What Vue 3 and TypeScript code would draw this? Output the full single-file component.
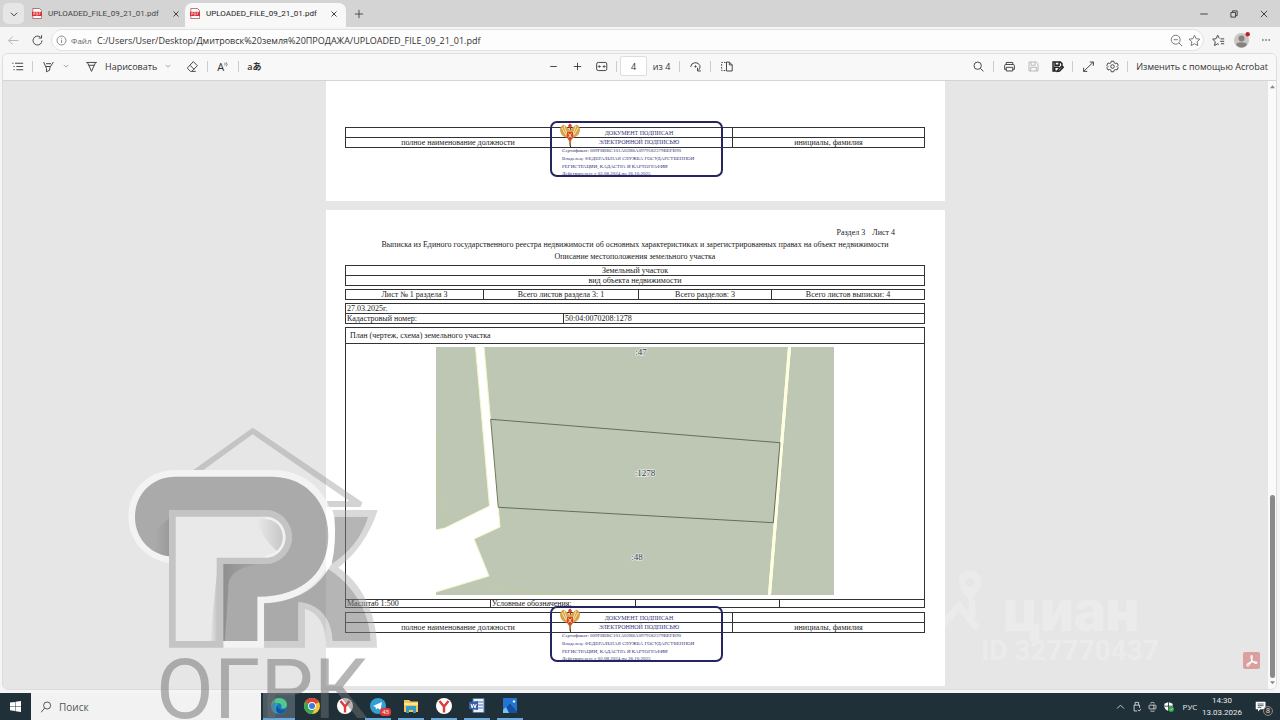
<script setup lang="ts">
import { ref } from 'vue'

const tabs = ref([
  { id: 1, title: 'UPLOADED_FILE_09_21_01.pdf', active: false },
  { id: 2, title: 'UPLOADED_FILE_09_21_01.pdf', active: true },
])
const url = ref('C:/Users/User/Desktop/Дмитровск%20земля%20ПРОДАЖА/UPLOADED_FILE_09_21_01.pdf')
const page = ref('4')
const query = ref('')

const stampLines = [
  'Сертификат: 009F8BBC101A02B8A0979182379BEFB90',
  'Владелец: ФЕДЕРАЛЬНАЯ СЛУЖБА ГОСУДАРСТВЕННОЙ',
  'РЕГИСТРАЦИИ, КАДАСТРА И КАРТОГРАФИИ',
  'Действителен: с 02.08.2024 по 26.10.2025',
]
const apps = ['edge', 'chrome', 'yandex', 'telegram', 'explorer', 'yandex2', 'word', 'photos']
</script>

<template>
  <div class="screen">
    <header class="tabs">
      <button class="tabmenu" aria-label="Меню вкладок">
        <svg viewBox="0 0 16 16" class="ic small"><path d="M3 6l5 5 5-5" /></svg>
      </button>
      <div v-for="t in tabs" :key="t.id" class="tab" :class="{ active: t.active }">
        <svg viewBox="0 0 12 12" class="pdf">
          <path d="M1 0h8l2.500 2.500V12H1z" fill="#fff" stroke="#a33" stroke-width=".8" />
          <path d="M0 4h12v5H0z" fill="#d92b32" />
          <path d="M2 8V5h1.500v1.500H2M5 5v3h1.500V5H5M8.500 8V5H10M8.500 6.500H10" fill="none" stroke="#fff" stroke-width=".6" />
        </svg>
        <span class="tabtitle">{{ t.title }}</span>
        <button class="close" aria-label="Закрыть вкладку">
          <svg viewBox="0 0 16 16" class="ic small"><path d="M4 4l8 8M12 4l-8 8" /></svg>
        </button>
      </div>
      <button class="newtab" aria-label="Новая вкладка">
        <svg viewBox="0 0 16 16" class="ic"><path d="M8 2.500v11M2.500 8h11" /></svg>
      </button>
      <div class="winbtns">
        <button aria-label="Свернуть"><svg viewBox="0 0 16 16" class="ic small"><path d="M2 8h12" /></svg></button>
        <button aria-label="Восстановить"><svg viewBox="0 0 16 16" class="ic small"><path d="M3 5.500h7.500V13H3zM5.500 5V3H13v7.500h-2" /></svg></button>
        <button aria-label="Закрыть"><svg viewBox="0 0 16 16" class="ic small"><path d="M3 3l10 10M13 3L3 13" /></svg></button>
      </div>
    </header>

    <div class="address">
      <button class="icb off" aria-label="Назад"><svg viewBox="0 0 16 16" class="ic"><path d="M14 8H2M7 3L2 8l5 5" /></svg></button>
      <button class="icb" aria-label="Обновить"><svg viewBox="0 0 16 16" class="ic"><path d="M13.500 8a5.500 5.500 0 1 1-2-4.200M13 1.500V5H9.500" /></svg></button>
      <div class="omni">
        <svg viewBox="0 0 16 16" class="ic info"><circle cx="8" cy="8" r="6.500" /><path d="M8 7v4.500M8 4.500v1" /></svg>
        <label class="scheme" for="url">Файл</label>
        <input id="url" v-model="url" class="url" type="text" />
        <button class="mini" aria-label="Масштаб"><svg viewBox="0 0 16 16" class="ic light"><circle cx="7" cy="7" r="5.500" /><path d="M11 11l4 4M4.500 7h5" /></svg></button>
        <button class="mini" aria-label="В избранное"><svg viewBox="0 0 16 16" class="ic light"><path d="M8 1.500l2 4.300 4.700.6-3.500 3.200.9 4.700L8 12l-4.100 2.300.9-4.700L1.300 6.400 6 5.800z" /></svg></button>
      </div>
      <button class="icb" aria-label="Избранное"><svg viewBox="0 0 16 16" class="ic"><path d="M9 5.500L7 1.500 5 5.800l-4.200.6L4 9.500l-.9 4.700L7 12l1.500.8M10.500 6H15M10 9h5M11 12h4" /></svg></button>
      <button class="icb" aria-label="Профиль">
        <svg viewBox="0 0 16 16" class="avatar"><circle cx="7.500" cy="8.500" r="7.500" fill="#c9c6c4" /><circle cx="7.500" cy="6.500" r="3" fill="#85817f" /><path d="M2 12.500c1-3 10-3 11 0-2.500 4-8.500 4-11 0z" fill="#85817f" /><circle cx="13.700" cy="2.200" r="2.200" fill="#b8232b" /></svg>
      </button>
      <button class="icb" aria-label="Ещё"><svg viewBox="0 0 16 16" class="dots"><circle cx="3" cy="8" r="1.200" /><circle cx="8" cy="8" r="1.200" /><circle cx="13" cy="8" r="1.200" /></svg></button>
    </div>

    <div class="frame">
      <div class="toolbar">
        <div class="group start-side">
          <button class="icb" aria-label="Содержание"><svg viewBox="0 0 16 16" class="ic"><path d="M5 4h10M6.500 8H15M6.500 12H15M1.500 4h1.500M3 8h1.500M3 12h1.500" /></svg></button>
          <i class="sep"></i>
          <button class="icb" aria-label="Выделить"><svg viewBox="0 0 16 16" class="ic"><path d="M2 2.500l2.500 5.500h6L14 2.500M4.500 8l1 2.500v4l4-2V10l1-2M5 4.500h6" /></svg></button>
          <button class="chev" aria-label="Цвет выделения"><svg viewBox="0 0 16 16" class="ic tiny"><path d="M2 5l6 6 6-6" /></svg></button>
          <button class="draw"><svg viewBox="0 0 16 16" class="ic"><path d="M1.500 3h13M3 3l5 11 5-11M4.500 6.500h7" /></svg>Нарисовать</button>
          <button class="chev" aria-label="Параметры пера"><svg viewBox="0 0 16 16" class="ic tiny"><path d="M2 5l6 6 6-6" /></svg></button>
          <button class="icb erase" aria-label="Ластик"><svg viewBox="0 0 16 16" class="ic"><path d="M2 9.500L9 2l5 5-7 7H5.500L2 10.500zM5 6.500l5 5M7 14h5" /></svg></button>
          <i class="sep"></i>
          <button class="icb glyph" aria-label="Прочесть вслух">A<svg viewBox="0 0 8 16" class="waves"><path d="M1 3q1.500 2 0 4M3.500 2q3 3.500 0 6.500" /></svg></button>
          <i class="sep"></i>
          <button class="icb glyph lingo" aria-label="Перевести">aあ</button>
        </div>
        <div class="group">
          <button class="icb" aria-label="Уменьшить"><svg viewBox="0 0 16 16" class="ic"><path d="M4 8h8" /></svg></button>
          <button class="icb" aria-label="Увеличить"><svg viewBox="0 0 16 16" class="ic"><path d="M8 3.500v9M3.500 8h9" /></svg></button>
          <button class="icb" aria-label="По ширине"><svg viewBox="0 0 16 16" class="ic"><rect x="2" y="3" width="12.500" height="10" rx="2" /><path d="M4.500 8h2.500M9.500 8H12M5.500 6.500L4 8l1.500 1.500M11 6.500L12.500 8 11 9.500" /></svg></button>
          <i class="sep"></i>
          <input v-model="page" class="pageno" type="text" aria-label="Страница" />
          <span class="of">из 4</span>
          <i class="sep"></i>
          <button class="icb" aria-label="Повернуть"><svg viewBox="0 0 16 16" class="ic"><path d="M2 8.500A6 6 0 0 1 13.500 7c.5 2-.5 4.500-2.500 6M10.500 9.500v4h4" /><circle cx="8" cy="8" r=".8" fill="#444" /></svg></button>
          <i class="sep"></i>
          <button class="icb" aria-label="Вид страницы"><svg viewBox="0 0 16 16" class="ic"><path d="M8 2.500h3.500L15 6v7.500H8zM11.500 2.500V6H15" /><path d="M7 3H2v10h5" stroke-dasharray="2 1.500" /></svg></button>
        </div>
        <div class="group end">
          <button class="icb" aria-label="Найти"><svg viewBox="0 0 16 16" class="ic"><circle cx="7" cy="7" r="4.500" /><path d="M10.500 10.500L14 14" /></svg></button>
          <i class="sep"></i>
          <button class="icb" aria-label="Печать"><svg viewBox="0 0 16 16" class="ic"><path d="M4 5.500V3h8v2.500M4 11.500H2V7q0-1.500 1.500-1.500h9Q14 5.500 14 7v4.500h-2M4 9h8v4.500H4z" /></svg></button>
          <button class="icb off" aria-label="Сохранить"><svg viewBox="0 0 16 16" class="ic"><path d="M2.500 2.500h9l2 2v9h-11zM5 2.500v4h5v-4M4.500 13.500V9h7v4.500" /></svg></button>
          <button class="icb" aria-label="Сохранить как"><svg viewBox="0 0 16 16" class="ic bold"><path d="M7 13.500H2.500v-11h9l2 2V7M5 2.500v4h5v-4M4.500 13.500V9H10M8 14l1-2.500L13.500 7.500l1.500 1.500-4.500 4.500z" /></svg></button>
          <i class="sep"></i>
          <button class="icb" aria-label="Во весь экран"><svg viewBox="0 0 16 16" class="ic"><path d="M9.500 2.500h4.500V7M14 2.500L2 14M2 9.500V14h4.500" /></svg></button>
          <button class="icb" aria-label="Параметры"><svg viewBox="0 0 16 16" class="ic"><circle cx="8" cy="8" r="2.200" /><path d="M6.500 1.500h3l.5 2 1.500.8 2-.6L15 6.500 13.500 8 15 9.500l-1.500 2.800-2-.6-1.500.8-.5 2h-3l-.5-2-1.500-.8-2 .6L1 9.500 2.500 8 1 6.500l1.500-2.800 2 .6L6 3.500z" /></svg></button>
          <i class="sep"></i>
          <button class="acro">Изменить с помощью Acrobat</button>
        </div>
      </div>

      <div class="viewer">
        <main class="pages">
          <section class="sheet first">
            <div class="signed">
              <table>
                <colgroup><col class="c1" /><col class="c2" /><col /></colgroup>
                <tbody>
                  <tr><td></td><td></td><td></td></tr>
                  <tr><td>полное наименование должности</td><td></td><td>инициалы, фамилия</td></tr>
                </tbody>
              </table>
              <div class="stamp">
                <svg viewBox="0 0 20 24" class="eagle">
                  <path d="M10 7C8 5 6 3 4 2 3 1 1 3 0 6c0 4 2 7 5 8l3 1 2 8 2-8 3-1c3-1 5-4 5-8-1-3-3-5-4-4-2 1-4 3-6 5z" fill="#d9a347" />
                  <path d="M2 5l4 7M4 3l3 8M18 5l-4 7M16 3l-3 8" stroke="#fff3cf" stroke-width=".8" />
                  <path d="M8 3q2-5 4 0l-2 3zM7 9h6v6l-3 3-3-3z" fill="#d8452c" /><path d="M8.500 10.500l3 4M11.500 10.500l-3 4" stroke="#fbe3b0" /><path d="M10 17v6" stroke="#8f6a35" />
                </svg>
                <p class="cap">ДОКУМЕНТ ПОДПИСАН</p><p class="cap">ЭЛЕКТРОННОЙ ПОДПИСЬЮ</p>
                <p v-for="l in stampLines" :key="l">{{ l }}</p>
              </div>
            </div>
          </section>

          <section class="sheet second">
            <p class="secno"><span>Раздел 3</span><span>Лист 4</span></p>
            <h1>Выписка из Единого государственного реестра недвижимости об основных характеристиках и зарегистрированных правах на объект недвижимости</h1>
            <h2>Описание местоположения земельного участка</h2>
            <table>
              <tbody>
                <tr><td>Земельный участок</td></tr>
                <tr><td>вид объекта недвижимости</td></tr>
              </tbody>
            </table>
            <table>
              <colgroup><col class="s1" /><col class="s2" /><col class="s3" /><col /></colgroup>
              <tbody>
                <tr><td>Лист № 1 раздела 3</td><td>Всего листов раздела 3: 1</td><td>Всего разделов: 3</td><td>Всего листов выписки: 4</td></tr>
              </tbody>
            </table>
            <table class="left">
              <colgroup><col class="k1" /><col /></colgroup>
              <tbody>
                <tr><td colspan="2">27.03.2025г.</td></tr>
                <tr><td>Кадастровый номер:</td><td>50:04:0070208:1278</td></tr>
              </tbody>
            </table>
            <table class="left plan">
              <colgroup><col /><col /><col /><col /></colgroup>
              <tbody>
                <tr class="planhead"><td colspan="4">План (чертеж, схема) земельного участка</td></tr>
                <tr class="maprow">
                  <td colspan="4">
                    <svg viewBox="0 0 398 248" class="map">
                      <g fill="#bdc7b4" stroke="#f6f8c4" stroke-width="1">
                        <path d="M0 0H39.500L53.500 159 9 181 0 183z" stroke="none" />
                        <path d="M48 0H352L332 248H0V245L53 229 38 192 64 180z" stroke="none" />
                        <path d="M355 0H398V248H335z" stroke="none" />
                        <path d="M39.500 0L53.500 159 9 181 0 183M48 0L64 180 38 192 53 229 0 245" fill="none" />
                        <path d="M353.500 0L333.500 248" stroke="#ffffdc" stroke-width="3" />
                      </g>
                      <path d="M0 85v50l9 30v15M55 233l5 9 76 6" fill="none" stroke="#c5d08c" stroke-width=".6" />
                      <path d="M54.700 72.300L344 95.700 337.300 175.700 62.300 160.300z" fill="none" stroke="#4d564c" stroke-width=".8" />
                      <g class="lots"><text x="205" y="8">:47</text><text x="209" y="129">:1278</text><text x="201" y="213">:48</text></g>
                    </svg>
                  </td>
                </tr>
                <tr class="scale"><td>Масштаб 1:500</td><td>Условные обозначения:</td><td></td><td></td></tr>
              </tbody>
            </table>
            <div class="signed">
              <table>
                <colgroup><col class="c1" /><col class="c2" /><col /></colgroup>
                <tbody>
                  <tr><td></td><td></td><td></td></tr>
                  <tr><td>полное наименование должности</td><td></td><td>инициалы, фамилия</td></tr>
                </tbody>
              </table>
              <div class="stamp">
                <svg viewBox="0 0 20 24" class="eagle">
                  <path d="M10 7C8 5 6 3 4 2 3 1 1 3 0 6c0 4 2 7 5 8l3 1 2 8 2-8 3-1c3-1 5-4 5-8-1-3-3-5-4-4-2 1-4 3-6 5z" fill="#d9a347" />
                  <path d="M2 5l4 7M4 3l3 8M18 5l-4 7M16 3l-3 8" stroke="#fff3cf" stroke-width=".8" />
                  <path d="M8 3q2-5 4 0l-2 3zM7 9h6v6l-3 3-3-3z" fill="#d8452c" /><path d="M8.500 10.500l3 4M11.500 10.500l-3 4" stroke="#fbe3b0" /><path d="M10 17v6" stroke="#8f6a35" />
                </svg>
                <p class="cap">ДОКУМЕНТ ПОДПИСАН</p><p class="cap">ЭЛЕКТРОННОЙ ПОДПИСЬЮ</p>
                <p v-for="l in stampLines" :key="l">{{ l }}</p>
              </div>
            </div>
          </section>
        </main>
        <div class="bar">
          <svg viewBox="0 0 8 6" class="arrow"><path d="M4 0l4 5H0z" /></svg>
          <span class="thumb"></span>
          <svg viewBox="0 0 8 6" class="arrow"><path d="M4 5l4-5H0z" /></svg>
        </div>
        <button class="acrobadge" aria-label="Acrobat">
          <svg viewBox="0 0 16 16"><path d="M2.500 13.500C1 12 5 9.500 8.500 9s6 .5 5 1.500S9 9.500 7.500 6 7 1.500 8 2s0 5-2 8.500-3 3.500-3.500 3z" fill="none" stroke="#fff" stroke-width="1.200" /></svg>
        </button>
        <div class="cian">
          <svg viewBox="0 0 50 66" class="pin"><circle cx="35" cy="14" r="8" /><path d="M30 22l5 6 5-6M3 62L24 38 42 60M37 32v18" /></svg>
          <div><strong>циан</strong><span>ID 327770437</span></div>
        </div>
      </div>
    </div>

    <footer class="taskbar">
      <button class="start" aria-label="Пуск"><svg viewBox="0 0 12 12"><path d="M0 1.700L5.500 1v4.700H0zM6 .9L12 0v5.700H6zM0 6.200h5.500v4.700L0 10.200zM6 6.200h6V12l-6-.9z" fill="#fff" /></svg></button>
      <label class="search">
        <svg viewBox="0 0 16 16" class="ic"><circle cx="9.500" cy="6" r="4.700" /><path d="M6.200 9.500L1.500 15" /></svg>
        <input v-model="query" type="text" placeholder="Поиск" aria-label="Поиск" />
      </label>
      <nav class="apps">
        <button v-for="a in apps" :key="a" :class="['app', a]" :aria-label="a">
          <svg v-if="a === 'edge'" viewBox="0 0 16 16"><circle cx="8" cy="8" r="8" fill="#1779c4" /><path d="M0 8C0 3 4 0 8 0c5 0 8 3 8 7 0 3-3 4-6 3 2-3-1-5-4-5S1 6 0 8z" fill="#52c987" /><path d="M0 8c1-3 5-4 8-2-4 1-4 7 1 9-5 2-9-2-9-7z" fill="#25a5d8" /><path d="M7 8c0 4 4 5 8 3-2 4-6 5-8 4-3-2-2-6 0-7z" fill="#15549d" /></svg>
          <svg v-else-if="a === 'chrome'" viewBox="0 0 16 16"><circle cx="8" cy="8" r="8" fill="#f6c634" /><path d="M8 8L1.100 4A8 8 0 0 1 14.900 4z" fill="#dc4437" /><path d="M8 8L1.100 4A8 8 0 0 0 8 16l3.500-6z" fill="#3aa655" /><circle cx="8" cy="8" r="3.900" fill="#fff" /><circle cx="8" cy="8" r="3" fill="#3c7ce0" /></svg>
          <svg v-else-if="a.startsWith('yandex')" viewBox="0 0 16 16"><circle cx="8" cy="8" r="8" fill="#fff" /><path d="M3.500 3L8 8.500 12.500 3M8 8v6.500" fill="none" stroke="#df3c37" stroke-width="2.400" /></svg>
          <svg v-else-if="a === 'telegram'" viewBox="0 0 16 16"><circle cx="8" cy="8" r="8" fill="#349fd3" /><path d="M3 8l9-4-1.500 8-3-2-1.500 1.500-.5-2.500z" fill="#fff" /></svg>
          <svg v-else-if="a === 'explorer'" viewBox="0 0 16 16"><path d="M1 2h5l2 1.500h7V14H1z" fill="#f2c75b" /><path d="M1 5h14v2H1z" fill="#ffe49a" /><path d="M3 8h10v7h-3v-3H6v3H3z" fill="#3a9bbd" /></svg>
          <svg v-else-if="a === 'word'" viewBox="0 0 16 16"><path d="M4 .5h11v14H4z" fill="#e9f0fa" stroke="#5577b0" /><path d="M9 4h5M9 7h5M9 10h5" stroke="#5577b0" /><path d="M0 4l9-1v9l-9-1z" fill="#3760a8" /><path d="M2 6l1.200 4L4.500 6 6 10l1.200-4" fill="none" stroke="#fff" /></svg>
          <svg v-else viewBox="0 0 16 16"><rect x="1" width="14" height="15" rx="1" fill="#2374cf" /><path d="M1 15V12l7-7 7 8v2z" fill="#74c3f4" /><path d="M7 15l-3-6 4-4 7 8v2z" fill="#1450a5" /><circle cx="12" cy="3.500" r="1.300" fill="#d6f0ff" /></svg>
          <span v-if="a === 'telegram'" class="count">43</span>
        </button>
      </nav>
      <div class="tray">
        <button aria-label="Скрытые значки"><svg viewBox="0 0 16 16" class="ic"><path d="M3 11l5-5 5 5" /></svg></button>
        <button aria-label="USB"><svg viewBox="0 0 16 16" class="ic"><path d="M6 6V2h5v4M4.500 6h8v4M4.500 6v8.500H9M10 13l2 1.500 2.500-3" /></svg></button>
        <button aria-label="Подключение"><svg viewBox="0 0 16 16" class="ic"><rect x="3" y="6" width="10" height="5.500" rx="1" /><path d="M5 3q3-2 6 0M5 14.500q3 1 6 0M10 6v5.500" /></svg></button>
        <button aria-label="Защита"><svg viewBox="0 0 16 16" class="ic"><path d="M8 1.500L2 4v4c0 3 2.500 5.500 6 6.500 3.500-1 6-3.500 6-6.500V4z" fill="#fff" stroke="none" /><path d="M8 1v14M2 7.500h12" stroke="#1f2e36" /><circle cx="12" cy="12" r="4" fill="#27a844" stroke="none" /><path d="M10 12l1.500 1.500L14 10.500" /></svg></button>
        <span class="lang">РУС</span>
        <time class="clock"><span>14:30</span><span>13.03.2026</span></time>
        <button class="notes" aria-label="Уведомления"><svg viewBox="0 0 16 16"><path d="M1 1h13v10H7l-3 3v-3H1z" fill="#fff" /><path d="M3.500 4h8M3.500 6.200h8M3.500 8.500h5" stroke="#1f2e36" /></svg><span>8</span></button>
      </div>
    </footer>

    <div class="brand">
      <svg viewBox="0 0 870 915">
        <defs>
          <linearGradient id="fold" x1="0" x2="1"><stop offset="0" stop-color="#666" stop-opacity=".4" /><stop offset="1" stop-color="#777" stop-opacity="0" /></linearGradient>
          <linearGradient id="foldr" x1="0" x2="1"><stop offset="0" stop-color="#777" stop-opacity="0" /><stop offset="1" stop-color="#777" stop-opacity=".3" /></linearGradient>
        </defs>
        <path d="M250 165L428 38 757 262 752 276H650V258H718L428 58 280 165z" fill="rgba(145,145,145,.4)" />
        <path fill-rule="evenodd" d="M177 444C105 432 55 375 55 305 55 225 115 165 195 165H490C600 165 675 250 675 362 675 470 590 562 463 564V698H340V678H442V545C590 545 655 460 655 362 655 265 590 185 485 185H195C125 185 75 240 75 305 75 365 115 415 177 424z" fill="rgba(255,255,255,.5)" />
        <path d="M177 424C115 415 75 365 75 305 75 240 125 185 195 185H485C590 185 655 265 655 362 655 460 590 545 442 545V678H340V447H467C510 447 546 410 546 366S510 285 467 285H177z" fill="rgba(120,120,120,.55)" />
        <path fill-rule="evenodd" d="M177 285H467C510 285 546 322 546 366S510 447 467 447H340V698H177zM197 305V678H320V428H467C500 428 527 400 527 366S500 305 467 305z" fill="rgba(145,145,145,.4)" />
        <path d="M197 305H467C500 305 527 332 527 366S500 428 467 428H320V678H197z" fill="rgba(255,255,255,.12)" />
        <path d="M467 309C498 309 522 335 522 366S498 424 467 424" fill="none" stroke="#f1f1f1" stroke-width="8" />
        <path d="M340 678V447H467Q350 455 355 520L345 678z" fill="url(#fold)" />
        <path d="M177 424Q155 421 133 408V350L177 310z" fill="url(#foldr)" />
        <path d="M440 313H467C497 313 518 337 518 366 518 385 511 398 500 408Q455 370 440 313z" fill="url(#foldr)" />
        <path d="M300 678L320 480V678z" fill="url(#foldr)" />
        <path d="M673 305H775C755 370 715 415 665 447Q680 380 673 305zM655 462C730 510 780 590 782 678H667C665 610 625 565 565 562V678H462V565C560 560 620 520 655 462z" fill="rgba(120,120,120,.55)" />
        <path d="M667 285H803C780 360 735 420 685 458 750 500 801 590 801 698H648V678H782C780 590 730 510 655 462L665 447C715 415 755 370 775 305H673z" fill="rgba(170,170,170,.45)" />
        <path d="M462 678H565V562C625 565 665 610 667 678H648C645 625 620 590 585 582V698H462z" fill="rgba(190,190,190,.6)" />
      </svg>
      <span class="name">ОГРК</span>
    </div>
  </div>
</template>

<style>
body { margin: 0; }
</style>

<style scoped>
* { box-sizing: border-box; }
.screen { position: relative; height: 100vh; display: flex; flex-direction: column; overflow: hidden; background: #f5f5f5; color: #333; font: 9px "Open Sans", "Noto Sans", sans-serif; }
button { border: 0; padding: 0; background: none; color: inherit; font: inherit; display: flex; align-items: center; justify-content: center; }
input { border: 0; padding: 0; background: none; color: inherit; font: inherit; outline: 0; min-width: 0; }
p, h1, h2 { margin: 0; font-weight: 400; }
.ic { width: 13px; height: 13px; fill: none; stroke: #444; stroke-width: 1.2; flex: none; }
.ic.small { width: 10px; height: 10px; stroke-width: 1.6; }
.ic.tiny { width: 6px; height: 6px; stroke: #888; stroke-width: 2; }
.ic.light { stroke: #777; }
.ic.bold { stroke-width: 1.8; stroke: #222; }
.off { opacity: .35; }

.tabs { height: 27px; flex: none; display: flex; background: #d4d4d4; }
.tabmenu { width: 21px; height: 21px; margin: 3px 5px 3px 3px; border-radius: 5px; background: #e6e6e6; }
.tab { width: 156px; display: flex; align-items: center; padding-left: 3px; color: #444; }
.tab.active { width: 161px; background: #f8f8f8; margin: 3px 0 0; padding: 0 0 3px 5px; border-radius: 7px 7px 0 0; color: #222; }
.pdf { width: 10px; height: 11px; margin-right: 6px; flex: none; }
.tabtitle { font: 8px Roboto, sans-serif; white-space: nowrap; width: 122px; }
.tab .close { width: 12px; }
.newtab { width: 26px; }
.newtab .ic { width: 12px; height: 12px; }
.winbtns { margin-left: auto; display: flex; padding-right: 1px; }
.winbtns button { width: 30px; }

.address { height: 26px; flex: none; display: flex; align-items: center; padding-right: 2px; background: #f5f5f5; }
.address > .icb { width: 24px; height: 24px; }
.address > .icb:first-child { margin-left: 1px; }
.omni { flex: 1; height: 22px; margin: 0 2px; display: flex; align-items: center; background: #fdfdfd; border: 1px solid #e2e2e2; border-radius: 11px; padding: 0 0 0 4px; }
.ic.info { width: 11px; height: 11px; stroke: #777; }
.scheme { margin-left: 4px; width: 26px; color: #666; font-size: 8px; }
.url { flex: 1; color: #333; font-size: 9px; }
.mini { width: 18px; height: 18px; }
.avatar { width: 16px; height: 16px; }
.dots { width: 10px; height: 10px; fill: #333; }

.frame { flex: 1; min-height: 0; margin: 0 3px 3px 2px; display: flex; flex-direction: column; border: 1px solid #ddd; border-radius: 6px; overflow: hidden; }
.toolbar { height: 27px; flex: none; display: grid; grid-template-columns: 1fr auto 1fr; align-items: center; background: #f8f8f8; border-bottom: 1px solid #d4d4d4; padding-bottom: 2px; }
.group { display: flex; align-items: center; }
.start-side { padding-left: 2px; }
.group.end { justify-content: flex-end; padding-right: 8px; }
.icb { width: 24px; height: 22px; flex: none; }
.sep { width: 1px; height: 11px; margin: 0 3px; background: #ccc; }
.chev { width: 12px; height: 20px; }
.draw { gap: 7px; margin-left: 13px; margin-right: 5px; white-space: nowrap; }
.erase { margin-left: 6px; }
.glyph { font: 11px "Open Sans", "Noto Sans CJK JP", sans-serif; }
.lingo { font-size: 9px; font-weight: 600; }
.waves { width: 5px; height: 12px; fill: none; stroke: #444; }
.pageno { width: 27px; height: 20px; border: 1px solid #ddd; background: #fff; border-radius: 2px; text-align: center; }
.of { width: 29px; text-align: center; }
.acro { margin-left: 5px; white-space: nowrap; }

.viewer { position: relative; flex: 1; min-height: 0; display: flex; background: #e6e6e6; overflow: hidden; }
.pages { flex: 1; display: flex; flex-direction: column; align-items: center; gap: 9px; }
.sheet { width: 619px; flex: none; background: #fff; padding: 0 20px 0 19px; font: 8px/9px "Liberation Serif", serif; color: #222; }
.first { padding-top: 46px; padding-bottom: 53px; }
.second { padding-top: 17px; padding-bottom: 53px; }
.secno { display: flex; justify-content: flex-end; gap: 7px; padding-right: 30px; line-height: 12px; }
h1, h2 { font-size: 8px; line-height: 12px; text-align: center; white-space: nowrap; }
h2 { margin-bottom: 2px; }
table { width: 100%; border-collapse: collapse; table-layout: fixed; margin-bottom: 3px; }
td { height: 10px; padding: 0; border: 1px solid #333; text-align: center; line-height: 9px; white-space: nowrap; }
.left td { text-align: left; padding-left: 1px; }
.c1 { width: 225px; } .c2 { width: 162px; }
.s1 { width: 138px; } .s2 { width: 155px; } .s3 { width: 133px; }
.k1 { width: 218px; }
.plan { margin-bottom: 4px; }
.left .planhead td { height: 16px; padding-left: 4px; }
.left .maprow td { height: 256px; padding: 3px 0 0; vertical-align: top; }
.map { display: block; width: 398px; height: 248px; margin: 0 auto; }
.lots { font: 9px "Liberation Serif", serif; fill: #343c58; stroke: #e6eadf; stroke-width: 1.5px; paint-order: stroke; text-anchor: middle; }
.scale td { height: 8px; line-height: 7px; }
.signed { position: relative; }
.signed table { margin: 0; }
.stamp { position: absolute; left: 205px; top: -6px; width: 173px; height: 56px; border: 2px solid #25265f; border-radius: 7px; padding: 6px 0 0 10px; color: #33357a; font-size: 5px; line-height: 8px; white-space: nowrap; }
.stamp .cap { font-size: 6px; line-height: 9px; padding-right: 5px; text-align: center; }
.stamp p:last-child { line-height: 5px; }
.eagle { position: absolute; left: 8px; top: 0; width: 20px; height: 24px; }

.bar { width: 8px; background: #fafafa; display: flex; flex-direction: column; align-items: center; padding: 4px 0; }
.arrow { width: 5px; height: 4px; fill: #888; }
.thumb { width: 5px; height: 183px; margin: auto 0 3px; background: #8a8a8a; border-radius: 3px; }
.acrobadge { position: absolute; right: 16px; bottom: 20px; width: 17px; height: 17px; background: #d9a09f; border-radius: 2px; }
.acrobadge svg { width: 14px; height: 14px; }
.cian { position: absolute; right: 117px; bottom: 25px; display: flex; gap: 10px; opacity: .22; color: #fff; font-family: Roboto, sans-serif; font-weight: 700; }
.cian div { display: flex; flex-direction: column; }
.cian strong { font-size: 60px; line-height: 54px; padding-left: 8px; }
.cian span { font-size: 28px; line-height: 26px; margin-left: -14px; }
.pin { width: 50px; height: 66px; margin-top: -16px; fill: none; stroke: #fff; stroke-width: 7; }

.taskbar { height: 27px; flex: none; display: flex; background: #1f3039; color: #e8e8e8; }
.start { width: 31px; }
.start svg { width: 11px; height: 11px; }
.search { width: 230px; background: #f2f2f2; display: flex; align-items: center; gap: 7px; padding-left: 9px; color: #444; }
.search .ic { width: 12px; height: 12px; }
.search input { width: 140px; font-size: 10px; }
.search input::placeholder { color: #555; opacity: 1; }
.apps { display: flex; margin-left: 2px; gap: 7px; }
.app { position: relative; width: 26px; height: 27px; border-bottom: 2px solid #6ca9dc; }
.app.edge { width: 32px; margin-right: -3px; background: #4a5b64; }
.app.chrome, .app.yandex { border-color: transparent; }
.app svg { width: 16px; height: 16px; }
.count { position: absolute; right: 0; bottom: 2px; padding: 0 2px; background: #dc3b3b; border-radius: 3px; color: #fff; font-size: 6px; line-height: 8px; }
.tray { margin-left: auto; display: flex; align-items: center; padding-right: 10px; }
.tray > button { width: 16px; height: 24px; }
.tray .ic { stroke: #e4e4e4; width: 11px; height: 11px; }
.lang { width: 28px; text-align: center; font-size: 8px; }
.clock { width: 36px; display: flex; flex-direction: column; align-items: center; font: 8px/12px Roboto, sans-serif; white-space: nowrap; }
.tray .notes { position: relative; width: 18px; margin-left: 12px; }
.notes svg { width: 12px; height: 12px; }
.notes span { position: absolute; right: -3px; bottom: 3px; width: 10px; height: 10px; border-radius: 5px; border: 1px solid #888; background: #333; font-size: 7px; line-height: 8px; }

.brand { position: absolute; left: 110px; bottom: 0; width: 290px; height: 305px; pointer-events: none; }
.brand svg { display: block; width: 290px; height: 305px; }
.name { position: absolute; left: 46px; bottom: 0; font: 84px/60px Roboto, sans-serif; color: rgba(110, 110, 110, .5); }
</style>
